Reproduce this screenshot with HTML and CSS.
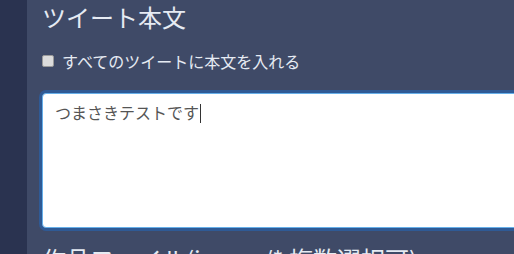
FILE: index.html
```html
<!doctype html>
<html lang="ja">

<head>
  <meta charset="UTF-8">
  <title>ツイート本文</title>
  <link rel="stylesheet" href="styles.css">
</head>

<body>
  <div class="sidebar"></div>

  <div class="main">
    <!-- Tweet body -->
    <h2 class="section-title">ツイート本文</h2>

    <label class="check-row">
      <input type="checkbox" class="check">
      <span>すべてのツイートに本文を入れる</span>
    </label>

    <div class="text-box">
      <span class="text-value">つまさきテストです</span><span class="caret"></span>
    </div>

    <!-- Upload files -->
    <h2 class="section-title">作品ファイル(image/* 複数選択可)</h2>
  </div>
</body>

</html>
```

FILE: styles.css
```css
html,
body {
  margin: 0;
  height: 100%;
}

body {
  display: flex;
  overflow: hidden;
  background-color: #3f4a67;
  font-family: "Noto Sans CJK JP", "Noto Sans", sans-serif;
}

.sidebar {
  flex: 0 0 27px;
  background-color: #2a3350;
}

.main {
  flex: 1;
  padding-left: 15px;
  min-width: 0;
}

.section-title {
  margin: 0;
  font-size: 24px;
  font-weight: normal;
  line-height: 34px;
  color: #e6ebf3;
  white-space: nowrap;
}

.check-row {
  display: flex;
  align-items: center;
  gap: 8px;
  margin-top: 15px;
  font-size: 16px;
  line-height: 24px;
  color: #e6ebf3;
}

.check {
  appearance: none;
  box-sizing: border-box;
  margin: 0;
  width: 12px;
  height: 12px;
  background-color: #dcdcdc;
  border: 1px solid #9a9a9a;
  border-radius: 2px;
}

.text-box {
  box-sizing: border-box;
  width: 600px;
  height: 135px;
  margin-top: 20px;
  margin-bottom: 14px;
  padding: 4px 12px;
  background-color: #fff;
  border: 1px solid #66afe9;
  border-radius: 4px;
  box-shadow: 0 0 0 3px #2f5a95;
  font-size: 16px;
  line-height: 28px;
  color: #555;
}

.caret {
  display: inline-block;
  width: 1px;
  height: 19px;
  margin-left: 1px;
  vertical-align: -4px;
  background-color: #333;
}
```
